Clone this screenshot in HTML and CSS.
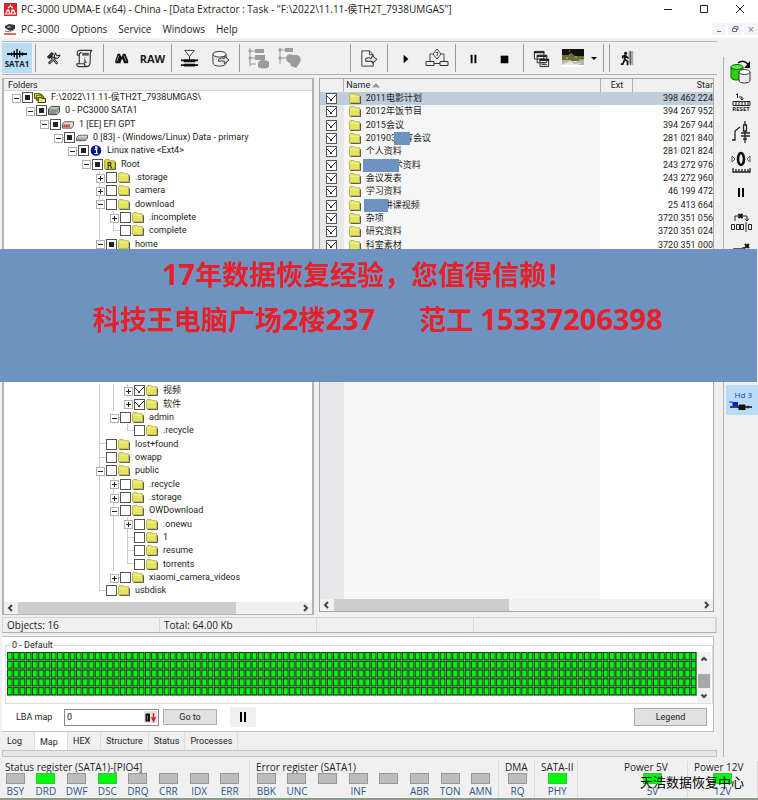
FILE: index.html
```html
<!DOCTYPE html>
<html lang="zh-CN">
<head>
<meta charset="utf-8">
<title>PC-3000 UDMA-E (x64)</title>
<link rel="stylesheet" href="styles.css">
</head>
<body>
<svg class="defs" aria-hidden="true">
  <defs>
    <linearGradient id="metal" x1="0" y1="0" x2="0" y2="1"><stop offset="0" stop-color="#e8e8e8"/><stop offset="1" stop-color="#8a8a8a"/></linearGradient>
    <symbol id="folder" viewBox="0 0 13 12"><path d="M1.5 11.5h11v-8" fill="none" stroke="#444"/><path d="M.5 10.500V2l1-1.500h4L7 2h4.500v8.500z" fill="#e6e35c" stroke="#b4b250"/><path d="M1.500 3.500h9.500" stroke="#f6f4a4"/></symbol>
    <symbol id="rootfolder" viewBox="0 0 13 12"><path d="M1.500 11.500h11v-8" fill="none" stroke="#444"/><path d="M.5 10.500V2l1-1.500h4L7 2h4.500v8.500z" fill="#dcd934" stroke="#a8a640"/><path d="M4.500 10V4h2.500q1.500 1.500 0 3H4.500M6.500 7L8.500 10" fill="none" stroke="#333" stroke-width="1.200"/></symbol>
    <symbol id="task" viewBox="0 0 13 12"><path d="M.5 7V1.500h6v1h2V7zM2.500 9V3.500h6v1h2V9z" fill="#e2df35" stroke="#4a4a10"/><path d="M4.500 11.500V6h3l1 1h4v4.500z" fill="#ecea5c" stroke="#222"/></symbol>
    <symbol id="drive" viewBox="0 0 13 12"><path d="M.5 4.500l3-3h9v6l-3 3h-9z" fill="#b9c4b9" stroke="#333"/><path d="M1 5.500h8.500l3-3M1 7.500h8.500l3-3M1 9h8" fill="none" stroke="#667066"/></symbol>
    <symbol id="part" viewBox="0 0 13 12"><path d="M.5 5.500l2-2.500h10v4l-2 3H.5z" fill="#ddd" stroke="#555"/><path d="M1.500 6h7v3h-7z" fill="#d4302c"/><path d="M3 7.500h1m2 0h1" stroke="#fff"/></symbol>
    <symbol id="vol" viewBox="0 0 13 12"><path d="M.5 6l2.500-2.500h9.500V7L10 9.500H.5z" fill="url(#metal)" stroke="#555"/></symbol>
    <symbol id="info" viewBox="0 0 13 12"><circle cx="6.500" cy="6" r="5.800" fill="#00128c"/><path d="M5 5h2.200v4M4.800 9.300h4M6 2.200h1.600v1.300H6z" fill="none" stroke="#fff" stroke-width="1.300"/></symbol>
  </defs>
</svg>

<header class="titlebar">
  <svg class="logo" viewBox="0 0 13 13"><path fill="#d8222a" d="M0 0h13v13H0z"/><path d="M6.500 1.500v2M4 5l2.500-2L9 5M2.500 7h3M7.500 7h3M1.500 11l1.500-3h2L6 11zM7 11l1-3h2l1.500 3z" fill="#d8222a" stroke="#fff" stroke-width="1.100"/></svg>
  <h1>PC-3000 UDMA-E (x64) - China - [Data Extractor : Task - "F:\2022\11.11-侯TH2T_7938UMGAS"]</h1>
  <div class="winbtns">
    <button aria-label="Minimize"><svg viewBox="0 0 10 10"><path d="M1 5.500h8"/></svg></button>
    <button aria-label="Maximize"><svg viewBox="0 0 10 10"><path d="M1.500 1.500h7v7h-7z"/></svg></button>
    <button aria-label="Close"><svg viewBox="0 0 10 10"><path d="M1 1l8 8M9 1L1 9"/></svg></button>
  </div>
</header>

<nav class="menubar">
  <svg class="menulogo" viewBox="0 0 12 12"><path d="M1 3l4-2 6 1v4L6 8 1 5z" fill="#333"/><path d="M2 4l3-1 3 1-3 1z" fill="#aaa"/><path d="M1 8q4 2 9-1" fill="none" stroke="#777"/><path d="M0 11h12" stroke="#d33" stroke-width="1.500"/></svg>
  <a href="#">PC-3000</a><a href="#">Options</a><a href="#">Service</a><a href="#">Windows</a><a href="#">Help</a>
  <div class="mdibtns">
    <button aria-label="Minimize child"><svg viewBox="0 0 8 8"><path d="M2 6.500h4"/></svg></button>
    <button aria-label="Restore child"><svg viewBox="0 0 8 8"><path d="M3 3V1.500h4v3H5.500M1.500 3.500h4v3h-4z"/></svg></button>
    <button aria-label="Close child"><svg viewBox="0 0 8 8"><path d="M1.500 2l4.500 4.500M6.500 2L2 6.500"/></svg></button>
  </div>
</nav>

<div class="workspace">
  <main>
    <div class="toolbar">
      <button class="sata on"><svg viewBox="0 0 24 11"><path d="M1 5.500h22" stroke="#000" stroke-width="2"/><path d="M12 0v11M9 2v7M15 2v7" stroke="#000" stroke-width="1.500"/><path d="M6 3.500v4M18 3.500v4" stroke="#000"/></svg><span>SATA1</span></button>
      <i class="sep"></i>
      <button aria-label="Tools"><svg viewBox="0 0 20 20"><path d="M5 15.500l8-8M14 15.500L7 7.500" stroke="#222" stroke-width="2.600"/><path d="M5.500 15l7-7M13.500 15L8 8.500" stroke="#eee" stroke-width=".8"/><path d="M3.500 8.500L8 4l2 1-4 5z" fill="#333" stroke="#111"/><path d="M12 4l1.500 3L17 6.500l-2.500 3.500-4-1z" fill="#ddd" stroke="#111"/></svg></button>
      <button aria-label="Script"><svg viewBox="0 0 20 20"><path d="M4.500 6.500H2.500q-1-4 2-5H18q-2 1-2 3.500V13q0 5.500-3.500 5.500H4q-2.500-.5-2-3h8q0 3 2.500 3M4.500 15.500v-9q0-3 2.500-3" fill="#eee" stroke="#333" stroke-width="1.200"/><path d="M7.500 5.500h7" stroke="#555" stroke-width="3"/><path d="M10.500 9v1M9.500 11.500h1.200v2.500M9 14h3.500" fill="none" stroke="#333"/></svg></button>
      <i class="sep"></i>
      <button aria-label="Find"><svg viewBox="0 0 20 20"><path d="M6 5h2.500l1 3h1l1-3H14l3 7v3h-4.500l-1-4h-1.500l-1 4H3.500v-3z" fill="#111"/><path d="M7 7l-2 6M12.500 7l2.500 6" stroke="#999"/></svg></button>
      <button class="raw">RAW</button>
      <i class="sep"></i>
      <button aria-label="Compress"><svg viewBox="0 0 20 20"><path d="M5 1.500h10L10 8z" fill="#fff" stroke="#333"/><path d="M1 12h18M1 17h18" stroke="#111" stroke-width="2"/><path d="M4 11h12v3H4zM4 15.500h12v3H4z" fill="#111"/><path d="M10 8v5" stroke="#111"/></svg></button>
      <button aria-label="Copy disk"><svg viewBox="0 0 20 20"><path d="M2 6v8q0 4 7 4t7-4V6" fill="#eee" stroke="#333"/><ellipse cx="9" cy="5.500" rx="7" ry="3" fill="#f4f4f4" stroke="#333"/><path d="M8 11q3-3 6-1V7.500l5 4-5 4V13q-3-1-6 0z" fill="#ddd" stroke="#333"/></svg></button>
      <i class="sep"></i>
      <button disabled aria-label="Save tree"><svg class="wide" viewBox="0 0 24 24"><path d="M4 2v18M4 5h6M4 12h6M4 18h6" stroke="#999"/><path d="M2 5l2-2 2 2-2 2zM2 12l2-2 2 2-2 2zM9 3h9v4H9zM9 9h10v5H9zM12 17q1-3 5-3t6 2v5q-6 3-11 0z" fill="#9c9c9c"/></svg></button>
      <button disabled aria-label="Save map"><svg class="wide" viewBox="0 0 24 24"><path d="M3 2v16M3 4h5M3 12h6" stroke="#999"/><path d="M1 4l2-2 2 2-2 2zM1 12l2-2 2 2-2 2zM8 2h8v4H8zM9 11q2-4 7-2 7-1 8 5l-2 4-3 4-5-2-1-3q-4-1-4-6z" fill="#9c9c9c"/></svg></button>
      <span class="space"></span>
      <i class="sep"></i>
      <button aria-label="Export"><svg viewBox="0 0 20 20"><path d="M3 2h8l4 4v12H3zM11 2v4h4" fill="#f4f4f4" stroke="#333"/><path d="M7 10q3-2 6 0l1-3 5 4-5 4v-2H7z" fill="#ddd" stroke="#222"/></svg></button>
      <i class="sep"></i>
      <button aria-label="Start"><svg viewBox="0 0 20 20"><path d="M8 6l5 4.500L8 15z"/></svg></button>
      <button aria-label="Branch"><svg class="wide" viewBox="0 0 24 24"><path d="M12 3l4 5-4 5-4-5zM8 8H5v7M16 8h3v7" fill="none" stroke="#444"/><path d="M1 15.500h8v4H1zM15 15.500h8v4h-8zM9 17.500h6" fill="#eee" stroke="#333"/><path d="M11 7q1-2 2 0l-1 2v1" fill="none" stroke="#444"/></svg></button>
      <i class="sep"></i>
      <button aria-label="Pause"><svg viewBox="0 0 20 20"><path d="M7 6h2v9H7zM11 6h2v9h-2z"/></svg></button>
      <button aria-label="Stop"><svg viewBox="0 0 20 20"><path d="M6 7h8v8H6z"/></svg></button>
      <i class="sep"></i>
      <button aria-label="Windows list"><svg viewBox="0 0 20 20"><path d="M2.500 2.500h10v8h-10zM5.500 6.500h10v8h-10zM8.500 10.500h9v8h-9z" fill="#f4f4f4" stroke="#222"/><path d="M2 3.500h11M5 7.500h11M8 11.500h10" stroke="#222" stroke-width="2"/><path d="M10 14.500h4M10 16.500h6" stroke="#222"/></svg></button>
      <button aria-label="Map colours"><svg class="wide" viewBox="0 0 24 24"><path fill="#111" d="M1 3h22v7H1z"/><path fill="#6e6a3c" d="M1 9h6l3-2 4 3h9v5H1z"/><path fill="#b8b8b0" d="M1 14h8l5 2 9-3v6H1z"/><path fill="#e8e8e8" d="M4 17l6-2 3 3 7-1-3 2H1z"/><path fill="#fff" d="M1 19h22v2H1z"/><path d="M8 5h1M14 11h2M5 12h2M18 14h2" stroke="#c9c67a"/></svg></button>
      <button class="drop" aria-label="More colours"><svg class="mini" viewBox="0 0 8 8"><path d="M1 3h6L4 6z"/></svg></button>
      <i class="sep"></i><i class="sep"></i>
      <button aria-label="Exit"><svg viewBox="0 0 20 20"><path d="M11 3l5-1v15l-5-2z" fill="#aaa"/><path d="M13 2v15" stroke="#444"/><circle cx="8" cy="4.500" r="1.600"/><path d="M8 6l-1 5 3 2v4M7 11l-2 5H3M5 10V7.500L8 7l3 3" fill="none" stroke="#111" stroke-width="1.800"/></svg></button>
    </div>

    <div class="panes">
      <section class="pane folders">
        <h2>Folders</h2>
        <ul class="tree">
          <li><b class="e minus"></b><label><input type="checkbox" class="mixed"><svg><use href="#task"/></svg>F:\2022\11.11-侯TH2T_7938UMGAS\</label></li>
          <li><i></i><b class="e minus"></b><label><input type="checkbox" class="mixed"><svg><use href="#drive"/></svg>0 - PC3000 SATA1</label></li>
          <li><i></i><i></i><b class="e minus"></b><label><input type="checkbox" class="mixed"><svg><use href="#part"/></svg>1 [EE] EFI GPT</label></li>
          <li><i></i><i></i><i></i><b class="e minus"></b><label><input type="checkbox" class="mixed"><svg><use href="#vol"/></svg>0 [83] - (Windows/Linux) Data - primary</label></li>
          <li><i></i><i></i><i></i><i></i><b class="e minus"></b><label><input type="checkbox" class="mixed"><svg><use href="#info"/></svg>Linux native &lt;Ext4&gt;</label></li>
          <li><i></i><i></i><i></i><i></i><i></i><b class="e minus"></b><label><input type="checkbox" class="mixed"><svg><use href="#rootfolder"/></svg>Root</label></li>
          <li><i></i><i></i><i></i><i></i><i></i><i></i><b class="e plus v"></b><label><input type="checkbox"><svg><use href="#folder"/></svg>.storage</label></li>
          <li><i></i><i></i><i></i><i></i><i></i><i></i><b class="e plus v"></b><label><input type="checkbox"><svg><use href="#folder"/></svg>camera</label></li>
          <li><i></i><i></i><i></i><i></i><i></i><i></i><b class="e minus v"></b><label><input type="checkbox"><svg><use href="#folder"/></svg>download</label></li>
          <li><i></i><i></i><i></i><i></i><i></i><i></i><i class="v"></i><b class="e plus v"></b><label><input type="checkbox"><svg><use href="#folder"/></svg>.incomplete</label></li>
          <li><i></i><i></i><i></i><i></i><i></i><i></i><i class="v"></i><b class="last"></b><label><input type="checkbox"><svg><use href="#folder"/></svg>complete</label></li>
          <li><i></i><i></i><i></i><i></i><i></i><i></i><b class="e minus v"></b><label><input type="checkbox" class="mixed"><svg><use href="#folder"/></svg>home</label></li>
          <li class="skip"></li>
          <li><i></i><i></i><i></i><i></i><i></i><i></i><i class="v"></i><i class="v"></i><b class="e plus v"></b><label><input type="checkbox" checked><svg><use href="#folder"/></svg><span class="cjk">视频</span></label></li>
          <li><i></i><i></i><i></i><i></i><i></i><i></i><i class="v"></i><i class="v"></i><b class="e plus"></b><label><input type="checkbox" checked><svg><use href="#folder"/></svg><span class="cjk">软件</span></label></li>
          <li><i></i><i></i><i></i><i></i><i></i><i></i><i class="v"></i><b class="e minus"></b><label><input type="checkbox"><svg><use href="#folder"/></svg>admin</label></li>
          <li><i></i><i></i><i></i><i></i><i></i><i></i><i class="v"></i><i></i><b class="last"></b><label><input type="checkbox"><svg><use href="#folder"/></svg>.recycle</label></li>
          <li><i></i><i></i><i></i><i></i><i></i><i></i><b class="mid"></b><label><input type="checkbox"><svg><use href="#folder"/></svg>lost+found</label></li>
          <li><i></i><i></i><i></i><i></i><i></i><i></i><b class="mid"></b><label><input type="checkbox"><svg><use href="#folder"/></svg>owapp</label></li>
          <li><i></i><i></i><i></i><i></i><i></i><i></i><b class="e minus v"></b><label><input type="checkbox"><svg><use href="#folder"/></svg>public</label></li>
          <li><i></i><i></i><i></i><i></i><i></i><i></i><i class="v"></i><b class="e plus v"></b><label><input type="checkbox"><svg><use href="#folder"/></svg>.recycle</label></li>
          <li><i></i><i></i><i></i><i></i><i></i><i></i><i class="v"></i><b class="e plus v"></b><label><input type="checkbox"><svg><use href="#folder"/></svg>.storage</label></li>
          <li><i></i><i></i><i></i><i></i><i></i><i></i><i class="v"></i><b class="e minus v"></b><label><input type="checkbox"><svg><use href="#folder"/></svg>OWDownload</label></li>
          <li><i></i><i></i><i></i><i></i><i></i><i></i><i class="v"></i><i class="v"></i><b class="e plus v"></b><label><input type="checkbox"><svg><use href="#folder"/></svg>.onewu</label></li>
          <li><i></i><i></i><i></i><i></i><i></i><i></i><i class="v"></i><i class="v"></i><b class="mid"></b><label><input type="checkbox"><svg><use href="#folder"/></svg>1</label></li>
          <li><i></i><i></i><i></i><i></i><i></i><i></i><i class="v"></i><i class="v"></i><b class="mid"></b><label><input type="checkbox"><svg><use href="#folder"/></svg>resume</label></li>
          <li><i></i><i></i><i></i><i></i><i></i><i></i><i class="v"></i><i class="v"></i><b class="last"></b><label><input type="checkbox"><svg><use href="#folder"/></svg>torrents</label></li>
          <li><i></i><i></i><i></i><i></i><i></i><i></i><i class="v"></i><b class="e plus"></b><label><input type="checkbox"><svg><use href="#folder"/></svg>xiaomi_camera_videos</label></li>
          <li><i></i><i></i><i></i><i></i><i></i><i></i><b class="last"></b><label><input type="checkbox"><svg><use href="#folder"/></svg>usbdisk</label></li>
        </ul>
        <div class="hscroll"><svg viewBox="0 0 8 8"><path d="M5 1L2 4l3 3"/></svg><div class="track"><div class="thumb wide-thumb"></div></div><svg viewBox="0 0 8 8"><path d="M3 1l3 3-3 3"/></svg></div>
      </section>

      <section class="pane files">
        <table>
          <colgroup><col class="c-check"><col class="c-name"><col class="c-ext"><col class="c-start"></colgroup>
          <thead><tr><th></th><th>Name <svg class="sort" viewBox="0 0 8 5"><path d="M0 4.500L4 0l4 4.500z" fill="#999"/></svg></th><th>Ext</th><th>Star</th></tr></thead>
          <tbody>
            <tr class="sel"><td><input type="checkbox" checked aria-label="2011电影计划"></td><td><svg><use href="#folder"/></svg>2011电影计划</td><td></td><td>398 462 224</td></tr>
            <tr><td><input type="checkbox" checked aria-label="2012年饭节目"></td><td><svg><use href="#folder"/></svg>2012年饭节目</td><td></td><td>394 267 952</td></tr>
            <tr><td><input type="checkbox" checked aria-label="2015会议"></td><td><svg><use href="#folder"/></svg>2015会议</td><td></td><td>394 267 944</td></tr>
            <tr><td><input type="checkbox" checked aria-label="201903"></td><td><svg><use href="#folder"/></svg>201903<span class="mask m1"></span>容会议</td><td></td><td>281 021 840</td></tr>
            <tr><td><input type="checkbox" checked aria-label="个人资料"></td><td><svg><use href="#folder"/></svg>个人资料</td><td></td><td>281 021 824</td></tr>
            <tr><td><input type="checkbox" checked aria-label="资料"></td><td><svg><use href="#folder"/></svg><span class="mask m2"></span>术资料</td><td></td><td>243 272 976</td></tr>
            <tr><td><input type="checkbox" checked aria-label="会议发表"></td><td><svg><use href="#folder"/></svg>会议发表</td><td></td><td>243 272 960</td></tr>
            <tr><td><input type="checkbox" checked aria-label="学习资料"></td><td><svg><use href="#folder"/></svg>学习资料</td><td></td><td>46 199 472</td></tr>
            <tr><td><input type="checkbox" checked aria-label="课视频"></td><td><svg><use href="#folder"/></svg><span class="mask m3"></span>讲课视频</td><td></td><td>25 413 664</td></tr>
            <tr><td><input type="checkbox" checked aria-label="杂项"></td><td><svg><use href="#folder"/></svg>杂项</td><td></td><td>3720 351 056</td></tr>
            <tr><td><input type="checkbox" checked aria-label="研究资料"></td><td><svg><use href="#folder"/></svg>研究资料</td><td></td><td>3720 351 024</td></tr>
            <tr><td><input type="checkbox" checked aria-label="科室素材"></td><td><svg><use href="#folder"/></svg>科室素材</td><td></td><td>3720 351 000</td></tr>
          </tbody>
        </table>
        <div class="rest"><i></i><i></i><i></i><i></i></div>
        <div class="hscroll"><svg viewBox="0 0 8 8"><path d="M5 1L2 4l3 3"/></svg><div class="track"><div class="thumb half-thumb"></div></div><svg viewBox="0 0 8 8"><path d="M3 1l3 3-3 3"/></svg></div>
      </section>
    </div>

    <div class="statusbar"><span>Objects: 16</span><span>Total: 64.00 Kb</span><span></span><span></span></div>

    <section class="mappanel">
      <fieldset>
        <legend>0 - Default</legend>
        <div class="maprow">
          <svg class="map" viewBox="0 0 660 45" preserveAspectRatio="none">
            <defs><pattern id="cell" width="6" height="9" patternUnits="userSpaceOnUse"><path fill="#8fa08f" d="M0 0h6v9H0z"/><path fill="#053a05" d="M0 0h5.400v8.200H0z"/><path fill="#00fa0c" d="M.8 1h3.800v6.300H.8z"/></pattern></defs>
            <path fill="url(#cell)" d="M0 0h660v45H0z"/>
          </svg>
          <div class="vscroll"><svg viewBox="0 0 8 8"><path d="M1.500 5.500L4 3l2.500 2.500"/></svg><div class="vthumb"></div><svg viewBox="0 0 8 8"><path d="M1.500 2.500L4 5l2.500-2.500"/></svg></div>
        </div>
      </fieldset>
      <div class="goto">
        <label for="lba">LBA map</label>
        <div class="field"><input id="lba" type="text" value="0"><button aria-label="Number base"><svg viewBox="0 0 11 11"><path d="M1.500 2.500h2.500v6H1.500z" fill="none" stroke="#111" stroke-width="2"/><path d="M8.500 1v6M7 6h3L8.500 9z" fill="#e02020" stroke="#e02020" stroke-width="1.500"/></svg></button></div>
        <button class="btn">Go to</button>
        <button class="pause" aria-label="Pause map"><svg viewBox="0 0 10 10"><path d="M2 0h2v10H2zM6 0h2v10H6z"/></svg></button>
        <button class="btn legend">Legend</button>
      </div>
    </section>

    <nav class="tabs"><a href="#">Log</a><a href="#" class="active">Map</a><a href="#">HEX</a><a href="#">Structure</a><a href="#">Status</a><a href="#">Processes</a></nav>
    <div class="splitter"></div>
  </main>

  <aside class="side">
    <button aria-label="Copy drive"><svg viewBox="0 0 24 24"><path d="M2 7v10q0 3 6 3t6-3V7" fill="#2fd014" stroke="#145a0a"/><ellipse cx="8" cy="7" rx="6" ry="2.500" fill="#55f038" stroke="#145a0a"/><path d="M10 12v8q0 3 5.500 3t5.500-3v-8" fill="#ececf4" stroke="#333"/><ellipse cx="15.500" cy="12" rx="5.500" ry="2.500" fill="#fff" stroke="#333"/><path d="M9 3q5-4 10 1" fill="none" stroke="#111" stroke-width="1.500"/><path d="M21 1v7h-6z"/></svg></button>
    <button class="reset" aria-label="Reset"><svg viewBox="0 0 24 14"><path d="M7 3l1.500-1.500V6M10 5h3v3m-1.500-1.500L13 8l1.500-1.500M4 9.500h17v4H4zM7 9v5M10 9v5M13 9v5M16 9v5M19 9v5" fill="none" stroke="#222"/></svg><span>RESET</span></button>
    <button aria-label="Circuit"><svg viewBox="0 0 24 24"><path d="M3 20h3V11l5-4M16 1v4M16 11v12M12 13h9M12 16h9M14 19h4M14.500 5h3v6h-3z" fill="none" stroke="#222" stroke-width="1.300"/></svg></button>
    <button aria-label="Zero head"><svg viewBox="0 0 24 24"><ellipse cx="12" cy="9" rx="3" ry="6" fill="none" stroke="#111" stroke-width="2.600"/><path d="M3 6l3 3-3 3zM21 6l-3 3 3 3z" fill="none" stroke="#555"/><path d="M4 18v4h17v-4M7 19v3M10 19v3M13 19v3M16 19v3M19 19v3" fill="none" stroke="#222" stroke-width="1.300"/></svg></button>
    <button aria-label="Pause drive"><svg viewBox="0 0 24 24"><path d="M9 8h2v9H9zM13 8h2v9h-2z"/></svg></button>
    <button aria-label="Skip sectors"><svg viewBox="0 0 24 24"><path d="M6 11V6h12v5M16 8.500l2 2.500 2-2.500M2.500 14.500h3v5h-3zM7.500 14.500h3v5h-3zM11.500 14.500h3v5h-3zM19.500 14.500h3v5h-3zM17 12v10" fill="none" stroke="#222"/><path d="M9.500 4l4 4M13.500 4l-4 4" stroke="#111" stroke-width="2"/></svg></button>
    <button aria-label="Cancel sector"><svg viewBox="0 0 24 24"><path d="M5 9h7v12H5zM13 8h3" fill="#bbb" stroke="#222" stroke-width="1.600"/><path d="M16 4l4 4M20 4l-4 4" stroke="#111" stroke-width="2"/></svg></button>
    <button class="hd"><span>Hd 3</span><svg viewBox="0 0 24 10"><path d="M1 7h22" stroke="#111" stroke-width="1.500"/><path d="M10 5h6v5h-6zM19 5.500v3" fill="#111" stroke="#111"/><path d="M0 2h4v4" fill="none" stroke="#22d"/><path d="M4 2h5v4H4z" fill="#11d"/></svg></button>
  </aside>
</div>

<footer class="registers">
  <section class="reg status"><h3>Status register (SATA1)-[PIO4]</h3><ul><li>BSY</li><li class="on">DRD</li><li>DWF</li><li class="on">DSC</li><li>DRQ</li><li>CRR</li><li>IDX</li><li>ERR</li></ul></section>
  <section class="reg error"><h3>Error register (SATA1)</h3><ul><li>BBK</li><li>UNC</li><li></li><li>INF</li><li></li><li>ABR</li><li>TON</li><li>AMN</li></ul></section>
  <section class="reg"><h3>DMA</h3><ul><li>RQ</li></ul></section>
  <section class="reg"><h3>SATA-II</h3><ul><li class="on">PHY</li></ul></section>
  <section class="reg power first"><h3>Power 5V</h3><ul><li class="on">5V</li></ul></section>
  <section class="reg power"><h3>Power 12V</h3><ul><li class="on">12V</li></ul></section>
  <p class="stamp">天浩数据恢复中心</p>
</footer>

<div class="banner">
  <p><span><b>17</b>年数据恢复经验，您值得信赖！</span></p>
  <p><span>科技王电脑广场<b>2</b>楼<b>237</b></span><span>范工 <b>15337206398</b></span></p>
</div>
</body>
</html>
```
FILE: styles.css
```css
* { box-sizing: border-box; }
body {
  margin: 0;
  min-height: 100vh;
  display: flex;
  flex-direction: column;
  position: relative;
  background: #f0f0f0;
  color: #1c1c1c;
  font: 10px/13px "Open Sans", "Noto Sans CJK SC", sans-serif;
}
h1, h2, h3, p, ul { margin: 0; padding: 0; font-size: inherit; font-weight: inherit; }
ul { list-style: none; }
a { color: inherit; text-decoration: none; }
button { margin: 0; padding: 0; border: 0; background: none; font: inherit; color: inherit; }
.defs { position: absolute; width: 0; height: 0; }

.titlebar { display: flex; align-items: center; height: 18px; padding-left: 4px; background: #fff; }
.logo { width: 13px; height: 13px; margin-right: 4px; }
.titlebar h1 { flex: 1; white-space: nowrap; }
.winbtns { display: flex; }
.winbtns button { width: 36px; display: flex; justify-content: center; }
.winbtns svg { width: 10px; height: 10px; fill: none; stroke: #222; }

.menubar { display: flex; align-items: center; height: 20px; padding: 2px 0 0 4px; background: #fff; }
.menulogo { width: 12px; height: 12px; margin-right: 5px; }
.menubar a { margin-right: 11px; }
.mdibtns { display: flex; gap: 2px; margin-left: auto; }
.mdibtns button { width: 14px; height: 12px; background: #f4f4f6; }
.mdibtns svg { width: 8px; height: 8px; fill: none; stroke: #56708c; display: block; margin: auto; }

.workspace { flex: 1; display: flex; }
main { flex: 1; min-width: 0; display: flex; flex-direction: column; padding: 3px 6px 0 2px; }
.toolbar { display: flex; align-items: center; height: 34px; border-top: 1px solid #b8b8b8; border-bottom: 1px solid #b0b0b0; }
.toolbar button { width: 31px; height: 30px; flex: none; display: flex; align-items: center; justify-content: center; }
.toolbar button.sata { width: 30px; flex-direction: column; font: bold 8px/9px "Open Sans", sans-serif; }
.toolbar .on { background: #b9dcf7; }
.toolbar svg { width: 19px; height: 19px; }
.toolbar .sata svg { width: 22px; height: 10px; }
.toolbar svg.wide { width: 24px; height: 24px; }
.toolbar svg.mini { width: 8px; height: 8px; }
.toolbar button.drop { width: 12px; }
.toolbar button.raw { font-weight: bold; font-size: 11px; }
.sep { width: 6px; height: 28px; flex: none; background: linear-gradient(#999, #999) center / 1px 100% no-repeat; }
.space { width: 43px; }

.panes { display: flex; gap: 5px; flex: 1; padding-top: 3px; }
.pane { border: 1px solid #a6a6a6; background: #fff; min-width: 0; display: flex; flex-direction: column; }
.pane, .mappanel, .tabs { font: 9px/13px Roboto, "Noto Sans CJK SC", sans-serif; }
.folders { flex: 309; border-width: 1px 2px; border-color: #b4b4b4; }
.files { flex: 395; margin: 0 3px 3px 0; }
.folders h2 { height: 12px; line-height: 12px; padding-left: 4px; background: #f0f0f0; border-bottom: 1px solid #d0d0d0; }
.tree { display: grid; grid-template-rows: repeat(12, 13px 13px 14px) 13px 13px; padding-left: 4px; }
.tree .skip { grid-row: span 10; }
.tree li { display: flex; white-space: nowrap; }
.tree i, .tree b { width: 14px; flex: none; position: relative; }
.tree b { background: linear-gradient(#ccc, #ccc) 7px 6px / 7px 1px no-repeat; }
.tree .v, .tree .mid { background: linear-gradient(#ccc, #ccc) 7px 0 / 1px 100% no-repeat; }
.tree .mid { background: linear-gradient(#ccc, #ccc) 7px 0 / 1px 100% no-repeat, linear-gradient(#ccc, #ccc) 7px 6px / 7px 1px no-repeat; }
.tree .last { background: linear-gradient(#ccc, #ccc) 7px 0 / 1px 7px no-repeat, linear-gradient(#ccc, #ccc) 7px 6px / 7px 1px no-repeat; }
.tree .e::before { content: ""; position: absolute; left: 4px; top: 3px; width: 7px; height: 7px; border: 1px solid #b0b0b0; background: linear-gradient(#222, #222) center / 5px 1px no-repeat #fff; }
.tree .plus::before { background: linear-gradient(#222, #222) center / 5px 1px no-repeat, linear-gradient(#222, #222) center / 1px 5px no-repeat #fff; }
.tree label { display: flex; align-items: center; }
.tree svg { width: 12px; height: 11px; margin: 0 5px 0 1px; }
input[type="checkbox"] { appearance: none; width: 11px; height: 11px; margin: 0; border: 1px solid #555; background: #fff; flex: none; }
input.mixed { background: linear-gradient(#222, #222) center / 5px 5px no-repeat #fff; }
input[type="checkbox"]:checked { background: linear-gradient(45deg, transparent 48%, #333 48% 58%, transparent 58%) 0 2px / 5px 5px no-repeat, linear-gradient(-45deg, transparent 44%, #333 44% 56%, transparent 56%) 3px 1px / 6px 6px no-repeat #fff; }

.hscroll { display: flex; align-items: center; height: 12px; background: #f0f0f0; margin-top: auto; }
.hscroll svg { width: 8px; height: 8px; margin: 0 3px; fill: none; stroke: #444; stroke-width: 2; }
.track { flex: 1; height: 12px; }
.thumb { height: 12px; background: #cdcdcd; }
.wide-thumb { width: 78%; }
.half-thumb { width: 48%; }

table { width: 100%; border-collapse: collapse; table-layout: fixed; }
.c-check { width: 24px; }
.c-ext { width: 32px; }
.c-start { width: 81px; }
th, td { padding: 0; height: 13px; line-height: 13px; text-align: left; white-space: nowrap; overflow: hidden; font-weight: normal; }
th { background: #f0f0f0; border-right: 1px solid #b0b0b0; padding-left: 2px; }
th:nth-child(3) { text-align: center; }
th:nth-child(4) { text-align: right; border-right: 0; }
.sort { width: 8px; height: 5px; }
td { background: #fff; }
td:nth-child(1) { background: #e8e8ea; text-align: center; }
td:nth-child(2) { background: #f6f6f6; padding-left: 5px; }
td:nth-child(4) { text-align: right; }
tbody tr:nth-child(3n) td { height: 14px; }
tr.sel td { background: #bfcddb; }
td input, td svg { vertical-align: top; }
td input[type="checkbox"] { margin-top: 1px; }
td svg { width: 12px; height: 11px; margin: 1px 5px 0 0; }
.mask { display: inline-block; height: 13px; vertical-align: top; background: #6f93c1; position: relative; }
.m1 { width: 16px; margin: 0 -6px 0 -2px; }
.m2 { width: 36px; margin: 0 -5px 0 -3px; }
.m3 { width: 24px; margin: 0 -4px 0 -2px; }
.rest { flex: 1; display: grid; grid-template-columns: 24px 1fr 32px 81px; }
.rest i:nth-child(1) { background: #e8e8ea; }
.rest i:nth-child(2) { background: #f6f6f6; }

.statusbar { display: grid; grid-template-columns: 157px 157px 157px 1fr; height: 16px; margin-top: 2px; border: 1px solid #d4d4d4; border-bottom-color: #b0b0b0; }
.statusbar span { border-right: 1px solid #d8d8d8; padding-left: 4px; line-height: 14px; }

.mappanel { margin: 3px 3px 0 0; background: #fff; border: 1px solid #c0c0c0; border-left: 0; padding: 2px 0 3px 3px; }
fieldset { margin: 0; padding: 0 1px; border: 1px solid #dcdcdc; min-width: 0; }
legend { margin-left: 4px; padding: 0 1px; line-height: 13px; }
.maprow { display: flex; }
.map { flex: 1; min-width: 0; height: 44px; display: block; }
.vscroll { width: 14px; height: 51px; display: flex; flex-direction: column; align-items: center; justify-content: space-between; background: #f0f0f0; padding: 3px 0; }
.vscroll svg { width: 8px; height: 8px; fill: none; stroke: #444; stroke-width: 2; }
.vthumb { width: 12px; height: 14px; margin-top: 7px; background: #a8a8a8; }
.goto { display: flex; align-items: center; padding: 2px 6px 0 11px; height: 24px; }
.goto label { width: 48px; }
.field { display: flex; align-items: center; width: 95px; height: 17px; border: 1px solid #888; background: #fff; padding: 0 1px 0 2px; }
.field input { flex: 1; min-width: 0; border: 0; padding: 0; font: inherit; color: inherit; outline: 0; }
.field button { background: #e2e2e2; width: 13px; height: 12px; }
.field svg { width: 11px; height: 11px; display: block; margin: auto; }
.btn { width: 54px; height: 16px; margin-left: 4px; background: #e1e1e1; border: 1px solid #adadad; }
.legend { width: 73px; height: 18px; margin-left: auto; }
.pause { width: 26px; height: 20px; margin-left: 13px; background: #f0f0f0; }
.pause svg { width: 10px; height: 10px; display: block; margin: auto; }

.tabs { display: flex; height: 18px; line-height: 18px; }
.tabs a { padding: 0 5px; min-width: 33px; border-right: 1px solid #ddd; }
.tabs .active { background: #fff; line-height: 20px; }
.splitter { height: 7px; background: #e6e6e6; border: 1px solid #c4c4c4; }

.side { width: 35px; margin-top: 19px; border-left: 1px solid #b4b4b4; padding-left: 2px; display: flex; flex-direction: column; }
.side button { height: 30px; width: 30px; display: flex; flex-direction: column; align-items: center; justify-content: center; }
.side svg { width: 24px; height: 24px; }
.side .reset svg { height: 14px; }
.side .reset { font: bold 6px/7px "Open Sans", sans-serif; }
.side button.hd { width: 100%; margin-top: 118px; background: #b9dcf7; color: #2434c8; font: 8px/10px "Open Sans", sans-serif; align-items: stretch; }
.side .hd span { text-align: right; padding-right: 6px; }
.side .hd svg { height: 10px; margin-left: 3px; }

.registers { position: relative; display: flex; padding: 4px 0 0 3px; border-bottom: 2px solid #8c9c8c; }
.reg { border-right: 1px solid #dadada; margin-right: 2px; text-align: center; }
.reg h3 { text-align: left; padding: 0 4px; line-height: 12px; white-space: nowrap; }
.reg ul { display: flex; }
.reg li { flex: 1; min-height: 24px; color: #2c5788; line-height: 13px; }
.reg li::before { content: ""; display: block; width: 17px; height: 9px; margin: 0 auto 1px; background: #bcbcbc; border: 1px solid #989898; }
.reg li.on::before { background: #00fa0c; border-color: #3cc040; }
.status { flex: 0 0 247px; }
.reg.status h3 { padding: 0 2px; }
.status ul { margin: 0 4px 0 -3px; }
.error { flex: 0 0 247px; }
.error ul { margin: 0 2px 0 -1px; }
.reg:nth-child(3) { flex: 0 0 34px; }
.reg:nth-child(4) { flex: 0 0 39px; }
.reg.power { flex: 0 0 70px; margin-right: 0; }
.reg.power h3 { padding: 0 6px; }
.reg.power.first { margin-left: auto; }
.stamp { position: absolute; right: 14px; top: 16px; font: 13px/18px "Noto Sans CJK SC", sans-serif; color: #000; }

.banner { position: absolute; top: 249px; left: 0; right: 1px; height: 133px; padding-top: 3px; background: #6f93c1; color: #e62129; font: bold 27px/45px "Open Sans", "Noto Sans CJK SC", sans-serif; }
.banner p { padding-left: 162px; display: flex; gap: 44px; white-space: nowrap; }
.banner p + p { padding-left: 93px; }
.banner b { font-size: 29px; line-height: 1; font-weight: 700; }
```
